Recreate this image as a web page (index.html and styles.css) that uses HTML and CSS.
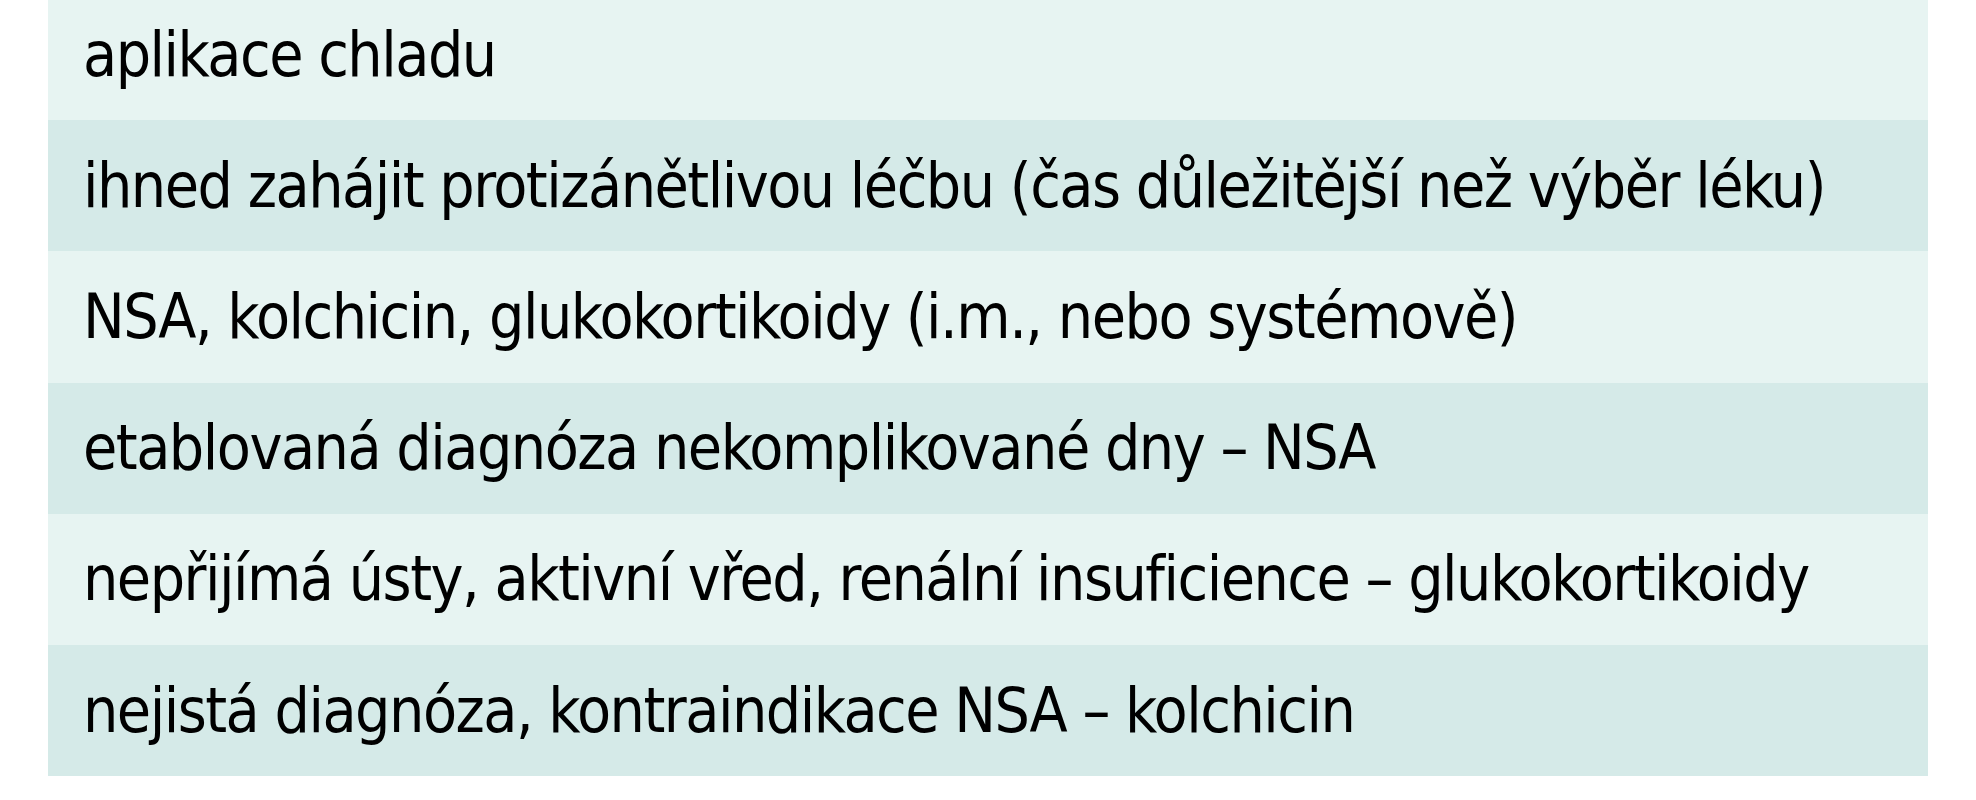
FILE: index.html
```html
<!DOCTYPE html>
<html lang="cs">
<head>
<meta charset="utf-8">
<title>Léčba akutní dny</title>
<link rel="stylesheet" href="styles.css">
</head>
<body>
<div class="table">
  <div class="row light"><span class="cell">aplikace chladu</span></div>
  <div class="row dark"><span class="cell">ihned zahájit protizánětlivou léčbu (čas důležitější než výběr léku)</span></div>
  <div class="row light"><span class="cell">NSA, kolchicin, glukokortikoidy (i.m., nebo systémově)</span></div>
  <div class="row dark"><span class="cell">etablovaná diagnóza nekomplikované dny – NSA</span></div>
  <div class="row light"><span class="cell">nepřijímá ústy, aktivní vřed, renální insuficience – glukokortikoidy</span></div>
  <div class="row dark"><span class="cell">nejistá diagnóza, kontraindikace NSA – kolchicin</span></div>
</div>
</body>
</html>
```

FILE: styles.css
```css
html, body {
  margin: 0;
  padding: 0;
  background: #ffffff;
}

body {
  overflow: hidden;
}

.table {
  width: 1880px;
  margin: -11px 0 0 48px;
  display: flex;
  flex-direction: column;
}

.row {
  height: 131.2px;
  display: flex;
  align-items: center;
  padding-left: 35px;
  box-sizing: border-box;
}

.light {
  background: #e7f4f2;
}

.dark {
  background: #d5eae8;
}

.cell {
  font-family: "DejaVu Sans", "Liberation Sans", sans-serif;
  font-stretch: condensed;
  font-size: 62px;
  letter-spacing: -1.5px;
  line-height: 1;
  color: #000;
  white-space: nowrap;
}
```
